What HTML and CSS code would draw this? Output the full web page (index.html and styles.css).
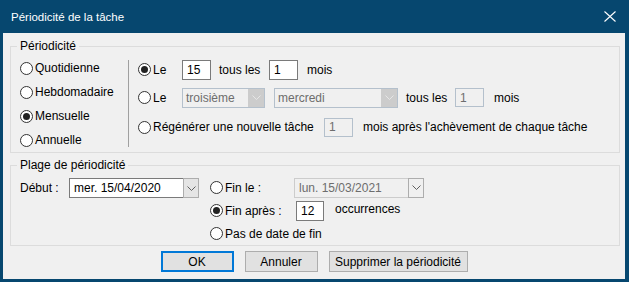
FILE: index.html
```html
<!DOCTYPE html>
<html lang="fr">
<head>
  <meta charset="UTF-8">
  <meta name="viewport" content="width=device-width, initial-scale=1.0">
  <title>Périodicité de la tâche</title>
  <link rel="stylesheet" href="styles.css">
</head>

<body>
  <div class="window">
    <div class="titlebar">
      <span class="title">Périodicité de la tâche</span>
      <svg class="close" width="12" height="11" viewBox="0 0 12 11">
        <path d="M0.5 0.5L11.5 10.5M11.5 0.5L0.5 10.5" stroke="#fff" stroke-width="1.1" fill="none"/>
      </svg>
    </div>

    <div class="content">
      <fieldset class="group pattern">
        <legend>Périodicité</legend>
        <div class="types">
          <label class="radio"><span class="circle"></span>Quotidienne</label>
          <label class="radio"><span class="circle"></span>Hebdomadaire</label>
          <label class="radio"><span class="circle checked"></span>Mensuelle</label>
          <label class="radio"><span class="circle"></span>Annuelle</label>
        </div>
        <div class="separator"></div>
        <div class="details">
          <div class="row row-day">
            <label class="radio lead"><span class="circle checked"></span>Le</label>
            <span class="field">15</span>
            <span class="every">tous les</span>
            <span class="field">1</span>
            <span class="unit">mois</span>
          </div>
          <div class="row row-nth">
            <label class="radio lead"><span class="circle"></span>Le</label>
            <span class="select disabled ordinal">
              <span class="value">troisième</span>
              <span class="arrow"><svg width="9" height="5" viewBox="0 0 9 5"><path d="M0.5 0.5L4.5 4.5L8.5 0.5" stroke="currentColor" fill="none"/></svg></span>
            </span>
            <span class="select disabled weekday">
              <span class="value">mercredi</span>
              <span class="arrow"><svg width="9" height="5" viewBox="0 0 9 5"><path d="M0.5 0.5L4.5 4.5L8.5 0.5" stroke="currentColor" fill="none"/></svg></span>
            </span>
            <span class="every">tous les</span>
            <span class="field disabled">1</span>
            <span class="unit">mois</span>
          </div>
          <div class="row row-regen">
            <label class="radio regen"><span class="circle"></span>Régénérer une nouvelle tâche</label>
            <span class="field disabled">1</span>
            <span class="unit">mois après l'achèvement de chaque tâche</span>
          </div>
        </div>
      </fieldset>

      <fieldset class="group range">
        <legend>Plage de périodicité</legend>
        <div class="start">
          <span class="start-label">Début :</span>
          <span class="combo">
            <span class="value">mer. 15/04/2020</span>
            <span class="arrow"><svg width="9" height="5" viewBox="0 0 9 5"><path d="M0.5 0.5L4.5 4.5L8.5 0.5" stroke="currentColor" fill="none"/></svg></span>
          </span>
        </div>
        <div class="ends">
          <div class="end-row">
            <label class="radio end-date"><span class="circle"></span>Fin le :</label>
            <span class="combo disabled">
              <span class="value">lun. 15/03/2021</span>
              <span class="arrow"><svg width="9" height="5" viewBox="0 0 9 5"><path d="M0.5 0.5L4.5 4.5L8.5 0.5" stroke="currentColor" fill="none"/></svg></span>
            </span>
          </div>
          <div class="end-row">
            <label class="radio end-count"><span class="circle checked"></span>Fin après :</label>
            <span class="field count">12</span>
            <span class="occurrences">occurrences</span>
          </div>
          <div class="end-row">
            <label class="radio"><span class="circle"></span>Pas de date de fin</label>
          </div>
        </div>
      </fieldset>

      <div class="buttons">
        <button type="submit" class="btn default">OK</button>
        <button type="button" class="btn">Annuler</button>
        <button type="button" class="btn remove">Supprimer la périodicité</button>
      </div>
    </div>
  </div>
</body>
</html>
```

FILE: styles.css
```css
* {
  box-sizing: border-box;
}

body {
  margin: 0;
  font-family: "Liberation Sans", Arial, sans-serif;
  font-size: 12px;
  color: #000;
}

.window {
  width: 629px;
  height: 282px;
  background-color: #06476f;
  display: flex;
  flex-direction: column;
}

.titlebar {
  height: 33px;
  display: flex;
  align-items: center;
  padding: 0 13px 0 11px;
  color: #fff;
}

.title {
  flex: 1;
  font-size: 11.5px;
}

.content {
  flex: 1;
  margin: 0 4px 3px 3px;
  background-color: #f0f0f0;
  padding: 6px 5px 0 7px;
}

/* group boxes */
.group {
  margin: 0;
  border: 1px solid #dcdcdc;
  padding: 0 9px;
  display: flex;
  min-width: 0;
}

.group legend {
  padding: 0 3px;
  margin-left: -3px;
  line-height: 14px;
}

.pattern {
  padding-top: 3px;
}

.range {
  margin-top: 5px;
  padding-top: 4px;
}

/* radio buttons */
.radio {
  display: flex;
  align-items: center;
  white-space: nowrap;
}

.circle {
  width: 13px;
  height: 13px;
  margin-right: 2px;
  border: 1px solid #333;
  border-radius: 50%;
  background-color: #fff;
  display: flex;
  align-items: center;
  justify-content: center;
  flex-shrink: 0;
}

.circle.checked::after {
  content: "";
  width: 7px;
  height: 7px;
  border-radius: 50%;
  background-color: #222;
}

.types {
  width: 108px;
  display: flex;
  flex-direction: column;
}

.types .radio {
  height: 24px;
}

.separator {
  width: 1px;
  height: 87px;
  margin: 4px 9px 0 0;
  background-color: #a0a0a0;
}

/* detail rows */
.row {
  display: flex;
  align-items: center;
}

.row-day {
  height: 27px;
}

.row-nth {
  height: 29px;
}

.row-regen {
  height: 30px;
}

.lead {
  width: 44px;
}

.regen {
  width: 186px;
}

.field {
  width: 29px;
  height: 20px;
  padding: 0 4px;
  border: 1px solid #7a7a7a;
  background-color: #fff;
  display: flex;
  align-items: center;
}

.field.disabled {
  height: 19px;
  border-color: #b4c0cc;
  background-color: #f0f0f0;
  color: #6d6d6d;
}

.every {
  width: 50px;
  margin-left: 8px;
}

.row-nth .every {
  width: 49px;
}

.unit {
  margin-left: 9px;
}

.row-nth .unit,
.row-regen .unit {
  margin-left: 10px;
}

/* drop-down lists */
.select {
  height: 20px;
  display: flex;
  border: 1px solid #b4c0cc;
  background-color: #f0f0f0;
  color: #6d6d6d;
}

.select .value {
  flex: 1;
  padding-left: 3px;
  display: flex;
  align-items: center;
}

.select .arrow {
  width: 17px;
  display: flex;
  align-items: center;
  justify-content: center;
  background-color: #cccccc;
  color: #e6e6e6;
  border-left: 1px solid #f0f0f0;
}

.ordinal {
  width: 83px;
}

.weekday {
  width: 124px;
  margin-left: 9px;
}

/* date combos */
.start {
  display: flex;
  align-items: flex-start;
  margin-top: 2px;
}

.start-label {
  width: 49px;
  line-height: 20px;
}

.combo {
  width: 130px;
  height: 20px;
  display: flex;
}

.combo .value {
  flex: 1;
  padding-left: 4px;
  border: 1px solid #7a7a7a;
  border-right: none;
  background-color: #fff;
  display: flex;
  align-items: center;
}

.combo .arrow {
  width: 16px;
  border: 1px solid #adadad;
  background-color: #e5e5e5;
  color: #606060;
  display: flex;
  align-items: center;
  justify-content: center;
}

.combo.disabled .value {
  border-color: #cccccc;
  background-color: #f0f0f0;
  color: #6d6d6d;
}

.combo.disabled .arrow {
  background-color: #f0f0f0;
  border-color: #adadad;
  color: #606060;
}

.ends {
  margin-left: 11px;
  display: flex;
  flex-direction: column;
}

.end-row {
  height: 23px;
  display: flex;
  align-items: center;
}

.end-date {
  width: 84px;
}

.end-count {
  width: 86px;
}

.field.count {
  width: 28px;
}

.occurrences {
  margin-left: 11px;
  align-self: flex-start;
  margin-top: 3px;
}

/* buttons */
.buttons {
  display: flex;
  justify-content: center;
  gap: 11px;
  margin-top: 5px;
  padding-right: 2px;
}

.btn {
  width: 73px;
  height: 21px;
  padding: 0;
  border: 1px solid #adadad;
  background-color: #e1e1e1;
  font-family: inherit;
  font-size: 12px;
  color: #000;
}

.btn.default {
  border: 2px solid #0078d7;
}

.btn.remove {
  width: 139px;
}
```
